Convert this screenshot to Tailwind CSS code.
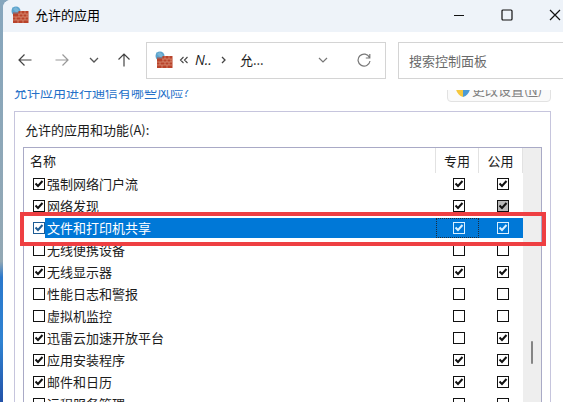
<!DOCTYPE html>
<html lang="zh-CN">
<head>
    <meta charset="UTF-8">
    <meta name="viewport" content="width=device-width, initial-scale=1.0">
    <title>允许的应用</title>
    <script src="https://cdn.jsdelivr.net/npm/@tailwindcss/browser@4"></script>
</head>
<body class="h-screen overflow-hidden bg-[linear-gradient(#86a6bd,#93a8b4_65%,#2a78cc_69%,#2f83d2_85%,#2352a8)] pl-[3px] font-['Noto_Sans_CJK_SC',sans-serif] text-[13px] leading-5 text-[#1c1c1c]">
    <!-- 防火墙图标 -->
    <svg class="hidden">
        <symbol id="firewall" viewBox="0 0 18 18">
            <circle cx="5" cy="5" r="4.5" fill="#5ba3cd"/>
            <path d="M2 3q3-3 5 0t-2 3z" fill="#a5d0e4"/>
            <path d="M2 7.500V6h5V5h10.500v12H2z" fill="#b9432b"/>
            <path d="M7 8h10.500M2 11h15.500M2 14h15.500M10 5v3M14 5v3M8 8v3M12 8v3M16 8v3M5 11v3M10 11v3M14 11v3M7 14v3M12 14v3" stroke="#dd9a80" stroke-width=".7" fill="none"/>
            <path d="M1 1.500h6L8 5l-1 2.500H1z" fill="#5ba3cd" opacity=".6"/>
        </symbol>
    </svg>

    <div class="flex h-full flex-col overflow-hidden rounded-tl-lg bg-white">
        <!-- 标题栏 -->
        <header class="flex h-8 shrink-0 items-center bg-[#eef3f9] pb-0.5 pl-2">
            <svg class="size-[18px]"><use href="#firewall"/></svg>
            <h1 class="ml-1.5 flex-1 text-black">允许的应用</h1>
            <button aria-label="最小化" class="flex h-full w-12 items-center justify-center">
                <svg class="size-3" viewBox="0 0 12 12" fill="none" stroke="#111"><path d="M1 6.500h10"/></svg>
            </button>
            <button aria-label="最大化" class="flex h-full w-12 items-center justify-center">
                <svg class="size-3" viewBox="0 0 12 12" fill="none" stroke="#111" stroke-width="1.200"><rect x="1" y="1" width="10" height="10" rx="1"/></svg>
            </button>
            <button aria-label="关闭" class="-mr-4 flex h-full w-12 items-center justify-center">
                <svg class="size-3" viewBox="0 0 12 12" fill="none" stroke="#111" stroke-width="1.200"><path d="M1 1l10 10M11 1L1 11"/></svg>
            </button>
        </header>

        <!-- 导航栏 -->
        <nav class="flex h-[58px] shrink-0 items-center pb-0.5 pl-[15px]">
            <button aria-label="后退" class="mr-[23px]"><svg class="size-3.5" viewBox="0 0 14 14" fill="none" stroke="#444" stroke-width="1.200"><path d="M13.500 7H1M6.500 1.500L1 7l5.500 5.500"/></svg></button>
            <button aria-label="前进" class="mr-5"><svg class="size-3.5" viewBox="0 0 14 14" fill="none" stroke="#999" stroke-width="1.200"><path d="M.5 7H13M7.500 1.500L13 7l-5.500 5.500"/></svg></button>
            <button aria-label="最近位置" class="mr-[18px]"><svg class="size-2.5" viewBox="0 0 10 10" fill="none" stroke="#555" stroke-width="1.300"><path d="M1 3l4 4 4-4"/></svg></button>
            <button aria-label="上移" class="mr-[15px]"><svg class="size-3.5" viewBox="0 0 14 14" fill="none" stroke="#444" stroke-width="1.200"><path d="M7 13.500V1M1.500 6.500L7 1l5.500 5.500"/></svg></button>
            <div class="flex h-[37px] w-60 items-center border border-[#d4d4d4] pl-2">
                <svg class="size-[18px]"><use href="#firewall"/></svg>
                <svg aria-hidden="true" class="mr-1.5 ml-1.5 h-2 w-2.5" viewBox="0 0 10 8" fill="none" stroke="#444" stroke-width="1.100"><path d="M4.500 1l-3 3 3 3M8.500 1l-3 3 3 3"/></svg>
                <span class="font-['Open_Sans'] text-[14px] font-medium italic">N..</span>
                <svg class="ml-2 size-2" viewBox="0 0 8 8" fill="none" stroke="#444" stroke-width="1.300"><path d="M2 1l3 3-3 3"/></svg>
                <span class="ml-3 flex-1">允...</span>
                <button aria-label="展开" class="mr-[29px]"><svg class="size-2.5" viewBox="0 0 10 10" fill="none" stroke="#777" stroke-width="1.200"><path d="M1 3l4 4 4-4"/></svg></button>
                <button aria-label="刷新" class="mr-3.5"><svg class="size-3.5" viewBox="0 0 14 14" fill="none" stroke="#777" stroke-width="1.200"><path d="M12.500 4.500A6 6 0 1 0 13 8M12.800 1v4h-4"/></svg></button>
            </div>
            <input type="text" aria-label="搜索控制面板" placeholder="搜索控制面板" class="ml-3 -mr-1 h-[37px] min-w-0 flex-1 border border-[#d4d4d4] px-2.5 placeholder:text-[#6a6a6a]">
        </nav>

        <main class="min-h-0 flex-1 overflow-hidden pr-3 pl-[11px]">
            <div class="-mt-3 flex h-6 items-center justify-between">
                <a href="#" class="pt-1 text-[#2470c8]">允许应用进行通信有哪些风险?</a>
                <button class="flex h-6 w-[104px] items-center justify-center gap-0.5 rounded border border-[#e2e2e2] bg-[#fafafa] text-[#808080]">
                    <svg class="size-3.5" viewBox="0 0 14 14">
                        <path d="M7 0v7H0V2q4 0 7-2z" fill="#4a9ad4"/>
                        <path d="M7 0v7h7V2q-4 0-7-2z" fill="#f5c73d"/>
                        <path d="M0 6h7v8Q1 12 0 6z" fill="#f5c73d"/>
                        <path d="M14 6H7v8q6-2 7-8z" fill="#4a9ad4"/>
                    </svg>
                    <span>更改设置(<u>N</u>)</span>
                </button>
            </div>

            <section class="mt-[9px] border border-[#c6c5dd] px-2 pt-2">
                <h2 id="listTitle" class="mb-[7px] pl-0.5">允许的应用和功能(A):</h2>
                <div class="relative flex border border-[#a9aac6]">
                    <table aria-labelledby="listTitle" class="flex-1 table-fixed border-collapse">
                        <thead>
                            <tr class="h-[25px]">
                                <th class="border-r border-[#e2e2e2] p-0 pl-1.5 text-left font-normal">名称</th>
                                <th class="w-[43px] border-r border-[#e2e2e2] p-0 font-normal">专用</th>
                                <th class="w-11 border-r border-[#e2e2e2] p-0 font-normal">公用</th>
                            </tr>
                        </thead>
                        <tbody id="appList"></tbody>
                    </table>
                    <div class="flex w-[18px] justify-center bg-[#eeeeee] pt-[193px]">
                        <div class="h-[23px] w-0.5 rounded bg-[#858585]"></div>
                    </div>
                    <!-- 选中行的红色标记框 -->
                    <div class="pointer-events-none absolute top-16 -right-[5px] -left-1 h-[34px] border-4 border-[#ee3f42]"></div>
                </div>
            </section>
        </main>
    </div>

    <script>
        // 名称, 已允许, 专用, 公用
        const apps = [
            ['强制网络门户流', 1, 1, 1],
            ['网络发现', 1, 1, 2],
            ['文件和打印机共享', 1, 1, 1],
            ['无线便携设备', 0, 0, 0],
            ['无线显示器', 1, 1, 1],
            ['性能日志和警报', 0, 0, 0],
            ['虚拟机监控', 0, 0, 0],
            ['迅雷云加速开放平台', 1, 0, 1],
            ['应用安装程序', 1, 1, 1],
            ['邮件和日历', 1, 1, 1],
            ['远程服务管理', 0, 0, 0]
        ];
        const selected = 2;

        function checkbox(state, id, label, color) {
            const bg = state === 2 ? 'bg-[#b8b8b8]' : '';
            return `<span class="inline-grid size-3 align-middle ${color}">
                <input type="checkbox" id="${id}" aria-label="${label}" ${state ? 'checked' : ''} class="peer col-start-1 row-start-1 size-3 appearance-none border border-current ${bg}">
                <svg class="pointer-events-none invisible col-start-1 row-start-1 size-3 peer-checked:visible" viewBox="0 0 12 12" fill="none" stroke="currentColor" stroke-width="2"><path d="M2.500 5.500l2.500 2.500 4.500-5"/></svg>
            </span>`;
        }

        document.getElementById('appList').innerHTML = apps.map(([name, on, priv, pub], i) => {
            const active = i === selected;
            const cell = active ? 'bg-[#0078d7]' : '';
            const color = active ? 'text-[#d9f0ff]' : 'text-[#111]';
            const focus = active ? 'outline outline-dotted -outline-offset-1 outline-[#1c2c3c]' : '';
            return `<tr class="h-[22px]">
                <td class="p-0">
                    <div class="flex h-[22px] items-center pl-[9px]">
                        ${checkbox(on, 'app' + i, name, active ? 'text-[#1d5c94]' : 'text-[#111]')}
                        <label for="app${i}" class="flex-1 pl-0.5 ${cell} ${active ? 'text-white' : ''}">${name}</label>
                    </div>
                </td>
                <td class="p-0"><div class="flex h-5 items-center justify-center pl-1 ${cell} ${focus}">${checkbox(priv, 'priv' + i, name + ' 专用', color)}</div></td>
                <td class="p-0"><div class="flex h-5 items-center justify-center pl-1 ${cell}">${checkbox(pub, 'pub' + i, name + ' 公用', color)}</div></td>
            </tr>`;
        }).join('');
    </script>
</body>
</html>
